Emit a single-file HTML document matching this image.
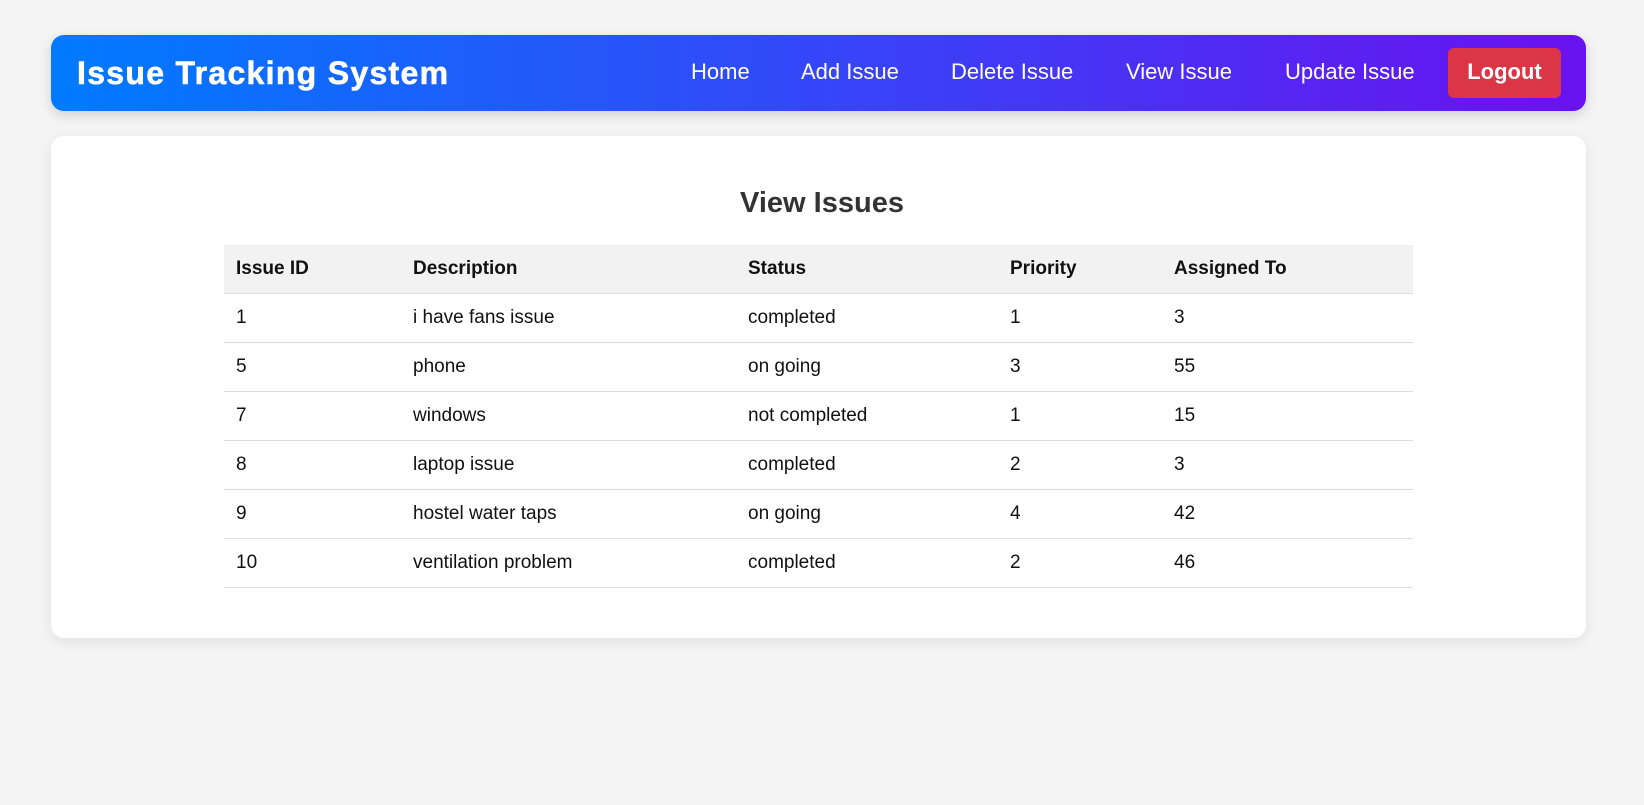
<!DOCTYPE html>
<html><head><style>
body{margin:0;background:#f4f4f4;font-family:"Liberation Sans",Arial,sans-serif;width:1644px;height:805px;overflow:hidden}
.nav{position:absolute;left:51px;top:35px;width:1535px;height:76px;border-radius:13px;background:linear-gradient(90deg,#007bff,#6a11f0);box-shadow:0 4px 12px rgba(0,0,0,.15)}
.nav h1{position:absolute;left:26px;top:0;margin:0;line-height:76px;color:#fff;font-size:32px;font-weight:bold;letter-spacing:1.3px;-webkit-text-stroke:0.6px #fff}
.nav a{position:absolute;top:0;line-height:74px;color:#fff;font-size:22px;text-decoration:none}
.lo{position:absolute;left:1397px;top:13px;width:113px;height:50px;background:#dc3545;border-radius:6px;color:#fff;font-weight:bold;font-size:22px;text-align:center;line-height:48px}
.card{position:absolute;left:51px;top:136px;width:1535px;height:502px;background:#fff;border-radius:13px;box-shadow:0 4px 14px rgba(0,0,0,.08)}
h2{position:absolute;left:0;width:100%;top:185px;margin:0;text-align:center;font-size:29px;color:#333;line-height:36px}
table{position:absolute;left:224px;top:245px;width:1189px;border-collapse:collapse;font-size:19px;color:#111}
th,td{text-align:left;padding:0 12px;height:48px;border-bottom:1px solid #ddd}
th{background:#f2f2f2;font-weight:bold;height:48px}
</style></head><body>
<div class="nav"><h1>Issue Tracking System</h1>
<a style="left:640px">Home</a><a style="left:750px">Add Issue</a><a style="left:900px">Delete Issue</a><a style="left:1075px">View Issue</a><a style="left:1234px">Update Issue</a>
<div class="lo">Logout</div></div>
<div class="card"></div>
<h2>View Issues</h2>
<table>
<tr><th style="width:153px">Issue ID</th><th style="width:311px">Description</th><th style="width:238px">Status</th><th style="width:140px">Priority</th><th>Assigned To</th></tr>
<tr><td>1</td><td>i have fans issue</td><td>completed</td><td>1</td><td>3</td></tr>
<tr><td>5</td><td>phone</td><td>on going</td><td>3</td><td>55</td></tr>
<tr><td>7</td><td>windows</td><td>not completed</td><td>1</td><td>15</td></tr>
<tr><td>8</td><td>laptop issue</td><td>completed</td><td>2</td><td>3</td></tr>
<tr><td>9</td><td>hostel water taps</td><td>on going</td><td>4</td><td>42</td></tr>
<tr><td>10</td><td>ventilation problem</td><td>completed</td><td>2</td><td>46</td></tr>
</table>
</body></html>
